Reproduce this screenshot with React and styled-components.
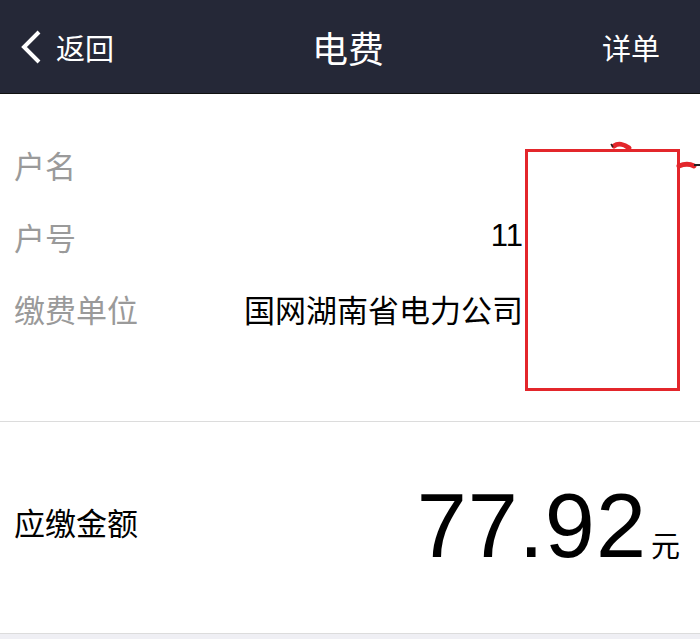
import styled, { createGlobalStyle } from 'styled-components'

const GlobalStyle = createGlobalStyle`
  html, body {
    margin: 0;
    padding: 0;
    background: #fff;
  }
  body {
    font-family: 'Liberation Sans', 'Noto Sans CJK SC', sans-serif;
  }
`;

const Page = styled.div`
  position: relative;
  width: 700px;
  height: 639px;
  overflow: hidden;
  display: flex;
  flex-direction: column;
  background: #fff;
`;

const Header = styled.header`
  height: 93px;
  flex-shrink: 0;
  display: grid;
  grid-template-columns: 1fr auto 1fr;
  align-items: center;
  background: #252837;
  border-bottom: 1px solid #111;
  color: #fff;
`;

const Back = styled.div`
  display: flex;
  align-items: center;
  gap: 14px;
  padding-left: 20px;
  font-size: 29px;
`;

const Title = styled.h1`
  margin: 0 0 0 -4px;
  font-size: 36px;
  font-weight: 400;
`;

const Action = styled.div`
  justify-self: end;
  padding-right: 40px;
  font-size: 29px;
`;

const InfoSection = styled.section`
  padding: 34px 0 77px;
  border-bottom: 1px solid #dcdcdc;
`;

const Row = styled.div`
  height: 72px;
  display: grid;
  grid-template-columns: 200px 1fr;
  align-items: center;
  padding: 0 177px 0 14px;
  font-size: 31px;
`;

const Label = styled.span`
  color: ${props => props.dark ? '#000' : '#9a9a9a'};
`;

const Value = styled.span`
  text-align: right;
  color: #000;
  white-space: nowrap;
`;

const Redaction = styled.div`
  position: absolute;
  left: 525px;
  top: 149px;
  width: 149px;
  height: 236px;
  border: 3px solid #e3262b;
  background: #fff;
`;

const Scribble = styled.svg`
  position: absolute;
  left: 600px;
  top: 138px;
  overflow: visible;
`;

const AmountSection = styled.section`
  flex: 1;
  display: flex;
  align-items: center;
  justify-content: space-between;
  padding: 0 20px 12px 14px;
  font-size: 31px;
  border-bottom: 1px solid #dcdcdc;
`;

const Amount = styled.div`
  display: flex;
  align-items: baseline;
  gap: 4px;
  margin-top: 10px;
`;

const Figure = styled.span`
  font-size: 90px;
  letter-spacing: 1px;
`;

const Unit = styled.span`
  font-size: 29px;
`;

const Footer = styled.div`
  height: 5px;
  flex-shrink: 0;
  background: #efeff4;
`;

export default function App() {
  return (
    <Page>
      <GlobalStyle />
      <Header>
        <Back>
          <svg width="22" height="34" viewBox="0 0 22 34">
            <path d="M19 2 L4 17 L19 32" fill="none" stroke="#fff" strokeWidth="4" />
          </svg>
          返回
        </Back>
        <Title>电费</Title>
        <Action>详单</Action>
      </Header>

      <InfoSection>
        <Row>
          <Label>户名</Label>
          <Value></Value>
        </Row>
        <Row>
          <Label>户号</Label>
          <Value>11</Value>
        </Row>
        <Row>
          <Label>缴费单位</Label>
          <Value>国网湖南省电力公司</Value>
        </Row>
      </InfoSection>

      <AmountSection>
        <Label dark>应缴金额</Label>
        <Amount>
          <Figure>77.92</Figure>
          <Unit>元</Unit>
        </Amount>
      </AmountSection>
      <Footer />

      <Redaction />
      <Scribble width="100" height="40">
        <path d="M14 8 C18 5 24 6 29 10" fill="none" stroke="#e3262b" strokeWidth="5" strokeLinecap="round" />
        <path d="M11 6 L13 9" stroke="#222" strokeWidth="1.5" />
        <path d="M79 28 C84 26 90 26 94 28" fill="none" stroke="#e3262b" strokeWidth="5" strokeLinecap="round" />
        <path d="M94 27 L100 27" stroke="#222" strokeWidth="2" />
      </Scribble>
    </Page>
  )
}
